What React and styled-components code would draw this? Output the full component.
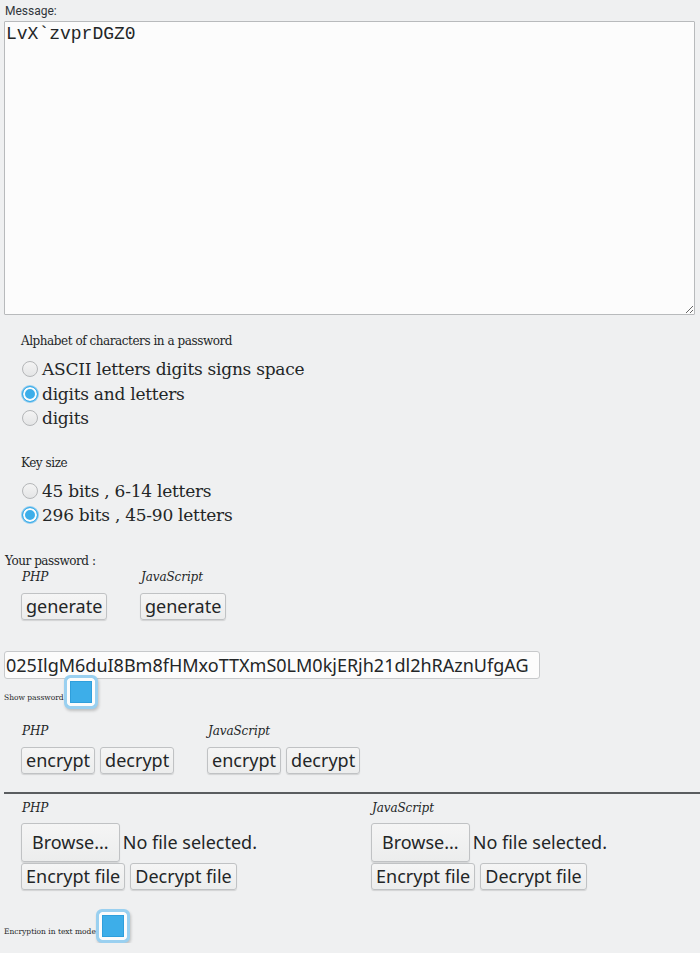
import React from "react";
import styled, { createGlobalStyle } from "styled-components";

const Global = createGlobalStyle`
  html, body { margin: 0; padding: 0; background: #eff0f1; }
  body { padding: 4px 0 0 4px; color: #232627; font-family: "DejaVu Serif", serif; }
  * { box-sizing: border-box; }
`;

const Page = styled.div`
  display: flex;
  flex-direction: column;
  width: 696px;
`;

const SmallLabel = styled.label`
  display: block;
  font-family: Roboto, "Noto Sans", sans-serif;
  font-size: 12px;
  line-height: 14px;
  padding-left: 1px;
  color: #31363b;
`;

const Message = styled.textarea`
  display: block;
  margin-top: 3px;
  width: 691px;
  height: 294px;
  background: #fcfcfc;
  border: 1px solid #b8babc;
  border-radius: 1px;
  padding: 2px 1px;
  font-family: "Liberation Mono", "DejaVu Sans Mono", monospace;
  font-size: 18px;
  line-height: 21px;
  color: #232627;
  resize: both;
  outline: none;
`;

const Section = styled.div`
  padding-left: ${(p) => p.$indent || 17}px;
  margin-top: ${(p) => p.$top || 0}px;
  display: flex;
  flex-direction: column;
`;

const Heading = styled.div`
  font-family: "DejaVu Serif", serif;
  font-size: 12px;
  line-height: 16px;
  letter-spacing: -0.45px;
`;

const RadioList = styled.div`
  margin-top: 8px;
  display: flex;
  flex-direction: column;
`;

const RadioRow = styled.label`
  display: flex;
  align-items: center;
  height: 24.5px;
  font-family: "DejaVu Serif", serif;
  font-size: 17px;
  letter-spacing: -0.25px;
`;

const Radio = styled.input.attrs({ type: "radio" })`
  appearance: none;
  margin: 0 4px 0 1px;
  width: 16px;
  height: 16px;
  border-radius: 50%;
  border: 1px solid #b4b6b8;
  background: linear-gradient(#f4f4f4, #e4e5e6);
  flex: none;
  &:checked {
    border: 1px solid #3daee9;
    background: #3daee9;
    box-shadow: inset 0 0 0 2px #fcfcfc, 0 0 0 1px #93cdf0;
  }
`;

const Columns = styled.div`
  display: flex;
  margin-top: ${(p) => p.$top || 0}px;
`;

const Column = styled.div`
  width: ${(p) => p.$w}px;
  flex: none;
  display: flex;
  flex-direction: column;
`;

const Lang = styled.div`
  font-family: "DejaVu Serif", serif;
  font-style: italic;
  font-size: 12px;
  line-height: 16px;
  padding-left: 1px;
  letter-spacing: -0.1px;
`;

const ButtonRow = styled.div`
  display: flex;
  align-items: center;
  gap: 5px;
  margin-top: ${(p) => p.$top || 0}px;
`;

const Button = styled.button`
  font-family: "Noto Sans", "Open Sans", sans-serif;
  font-size: 18px;
  color: #232627;
  height: ${(p) => p.$h || 27}px;
  padding: 0 ${(p) => p.$px || 4}px;
  background: linear-gradient(#f5f5f5, #eceded);
  border: 1px solid #c0c2c4;
  border-radius: 3px;
  box-shadow: 0 1px 1px rgba(0, 0, 0, 0.12);
  line-height: 1;
  cursor: pointer;
`;

const FileText = styled.span`
  font-family: "Noto Sans", "Open Sans", sans-serif;
  font-size: 18px;
  margin-left: -2px;
`;

const PasswordInput = styled.input`
  margin-top: 31px;
  width: 536px;
  height: 28px;
  background: #fcfcfc;
  border: 1px solid #c7c9cb;
  border-radius: 3px;
  padding: 0 1px;
  font-family: "Noto Sans", "Open Sans", sans-serif;
  font-size: 18px;
  color: #232627;
  outline: none;
`;

const CheckRow = styled.label`
  display: flex;
  align-items: flex-end;
  margin-top: ${(p) => p.$top || 0}px;
`;

const TinyText = styled.span`
  font-family: "DejaVu Serif", serif;
  font-size: 7.5px;
  line-height: 10px;
  padding-bottom: 6px;
`;

const Check = styled.input.attrs({ type: "checkbox" })`
  appearance: none;
  margin: 0;
  width: 34px;
  height: 34px;
  border-radius: 6px;
  border: 3px solid #9ad0f0;
  background: #3daee9;
  box-shadow: inset 0 0 0 3px #fcfcfc, inset 0 0 0 4px #2f9fdc,
    1px 2px 3px rgba(0, 0, 0, 0.2);
  flex: none;
`;

const Rule = styled.hr`
  margin: 18px 0 0 0;
  border: none;
  height: 2px;
  background: #5a5d60;
  width: 696px;
`;

export default function App() {
  return (
    <Page>
      <Global />
      <SmallLabel>Message:</SmallLabel>
      <Message defaultValue={"LvX`zvprDGZ0\n"} spellCheck={false} />

      <Section $top={18}>
        <Heading>Alphabet of characters in a password</Heading>
        <RadioList>
          <RadioRow>
            <Radio name="alpha" />
            ASCII letters digits signs space
          </RadioRow>
          <RadioRow>
            <Radio name="alpha" defaultChecked />
            digits and letters
          </RadioRow>
          <RadioRow>
            <Radio name="alpha" />
            digits
          </RadioRow>
        </RadioList>
      </Section>

      <Section $top={24}>
        <Heading>Key size</Heading>
        <RadioList>
          <RadioRow>
            <Radio name="size" />
            45 bits , 6-14 letters
          </RadioRow>
          <RadioRow>
            <Radio name="size" defaultChecked />
            296 bits , 45-90 letters
          </RadioRow>
        </RadioList>
      </Section>

      <Section $indent={1} $top={25}>
        <Heading>Your password :</Heading>
      </Section>
      <Section $indent={17}>
        <Columns>
          <Column $w={119}>
            <Lang>PHP</Lang>
            <ButtonRow $top={8}>
              <Button>generate</Button>
            </ButtonRow>
          </Column>
          <Column $w={120}>
            <Lang>JavaScript</Lang>
            <ButtonRow $top={8}>
              <Button>generate</Button>
            </ButtonRow>
          </Column>
        </Columns>
      </Section>

      <PasswordInput defaultValue="025IlgM6duI8Bm8fHMxoTTXmS0LM0kjERjh21dl2hRAznUfgAG" />
      <CheckRow $top={-4}>
        <TinyText>Show password</TinyText>
        <Check defaultChecked />
      </CheckRow>

      <Section $indent={17} $top={14}>
        <Columns>
          <Column $w={186}>
            <Lang>PHP</Lang>
            <ButtonRow $top={8}>
              <Button>encrypt</Button>
              <Button>decrypt</Button>
            </ButtonRow>
          </Column>
          <Column $w={200}>
            <Lang>JavaScript</Lang>
            <ButtonRow $top={8}>
              <Button>encrypt</Button>
              <Button>decrypt</Button>
            </ButtonRow>
          </Column>
        </Columns>
      </Section>

      <Rule />

      <Section $indent={17} $top={6}>
        <Columns>
          {["PHP", "JavaScript"].map((l) => (
            <Column $w={350} key={l}>
              <Lang>{l}</Lang>
              <ButtonRow $top={7}>
                <Button $h={39} $px={10}>Browse...</Button>
                <FileText>No file selected.</FileText>
              </ButtonRow>
              <ButtonRow $top={1}>
                <Button>Encrypt file</Button>
                <Button>Decrypt file</Button>
              </ButtonRow>
            </Column>
          ))}
        </Columns>
      </Section>

      <CheckRow $top={19}>
        <TinyText>Encryption in text mode</TinyText>
        <Check defaultChecked />
      </CheckRow>
    </Page>
  );
}
